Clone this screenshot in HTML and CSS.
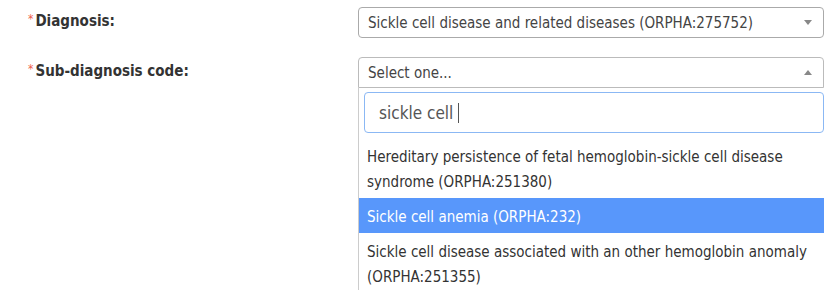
FILE: index.html
```html
<!DOCTYPE html>
<html lang="en">

<head>
    <meta charset="UTF-8">
    <meta name="viewport" content="width=device-width, initial-scale=1.0">
    <title>Diagnosis</title>
    <link rel="stylesheet" href="styles.css">
</head>

<body>
    <div class="form">
        <div class="form-row">
            <label class="form-label"><span class="required">*</span>Diagnosis:</label>
            <div class="field">
                <div class="select">
                    <span class="select-text">Sickle cell disease and related diseases (ORPHA:275752)</span>
                    <span class="arrow arrow-down"></span>
                </div>
            </div>
        </div>

        <div class="form-row">
            <label class="form-label"><span class="required">*</span>Sub-diagnosis code:</label>
            <div class="field">
                <div class="select select-open">
                    <span class="select-text">Select one...</span>
                    <span class="arrow arrow-up"></span>
                </div>
                <div class="dropdown">
                    <div class="search">
                        <span class="search-text">sickle cell</span><span class="caret"></span>
                    </div>
                    <ul class="results">
                        <li class="option">Hereditary persistence of fetal hemoglobin-sickle cell disease syndrome (ORPHA:251380)</li>
                        <li class="option highlighted">Sickle cell anemia (ORPHA:232)</li>
                        <li class="option">Sickle cell disease associated with an other hemoglobin anomaly (ORPHA:251355)</li>
                    </ul>
                </div>
            </div>
        </div>
    </div>
</body>

</html>
```

FILE: styles.css
```css
body {
    margin: 0;
    font-family: "DejaVu Sans Condensed", "DejaVu Sans", sans-serif;
    font-size: 15px;
    color: #333;
    background: #fff;
    overflow: hidden;
}

.form {
    padding-top: 7px;
    width: 824px;
}

.form-row {
    display: flex;
    align-items: flex-start;
    margin-bottom: 19px;
}

.form-label {
    width: 330px;
    padding-left: 28px;
    padding-top: 1px;
    font-weight: bold;
    line-height: 22px;
    color: #333;
}

.required {
    color: #f0604c;
    font-weight: normal;
    font-size: 12px;
    vertical-align: 3px;
    margin-right: 2px;
}

.field {
    width: 466px;
}

.select {
    display: flex;
    align-items: center;
    justify-content: space-between;
    height: 27px;
    padding: 2px 11px 0 9px;
    border: 1px solid #aaa;
    border-radius: 4px;
    color: #444;
    line-height: 27px;
}

.select-open {
    border-color: #bbb;
    border-radius: 4px 4px 0 0;
}

.arrow {
    width: 0;
    height: 0;
    margin-top: -2px;
    border-left: 4px solid transparent;
    border-right: 4px solid transparent;
}

.arrow-down {
    border-top: 5px solid #888;
}

.arrow-up {
    border-bottom: 5px solid #888;
}

.dropdown {
    width: 468px;
    height: 202px;
    border-left: 1px solid #ccc;
    overflow: hidden;
}

.search {
    display: flex;
    align-items: center;
    height: 39px;
    margin: 4px 3px 0 5px;
    padding-left: 14px;
    border: 1px solid #8bb8f4;
    border-radius: 4px;
    font-size: 17px;
    color: #555;
}

.caret {
    display: inline-block;
    width: 1px;
    height: 20px;
    margin-left: 5px;
    background: #555;
}

.results {
    list-style: none;
    margin: 5px 0 0;
    padding: 0;
}

.option {
    padding: 7px 10px 3px 8px;
    line-height: 25px;
    color: #333;
}

.option.highlighted {
    background: #5897fb;
    color: #fff;
}
```
